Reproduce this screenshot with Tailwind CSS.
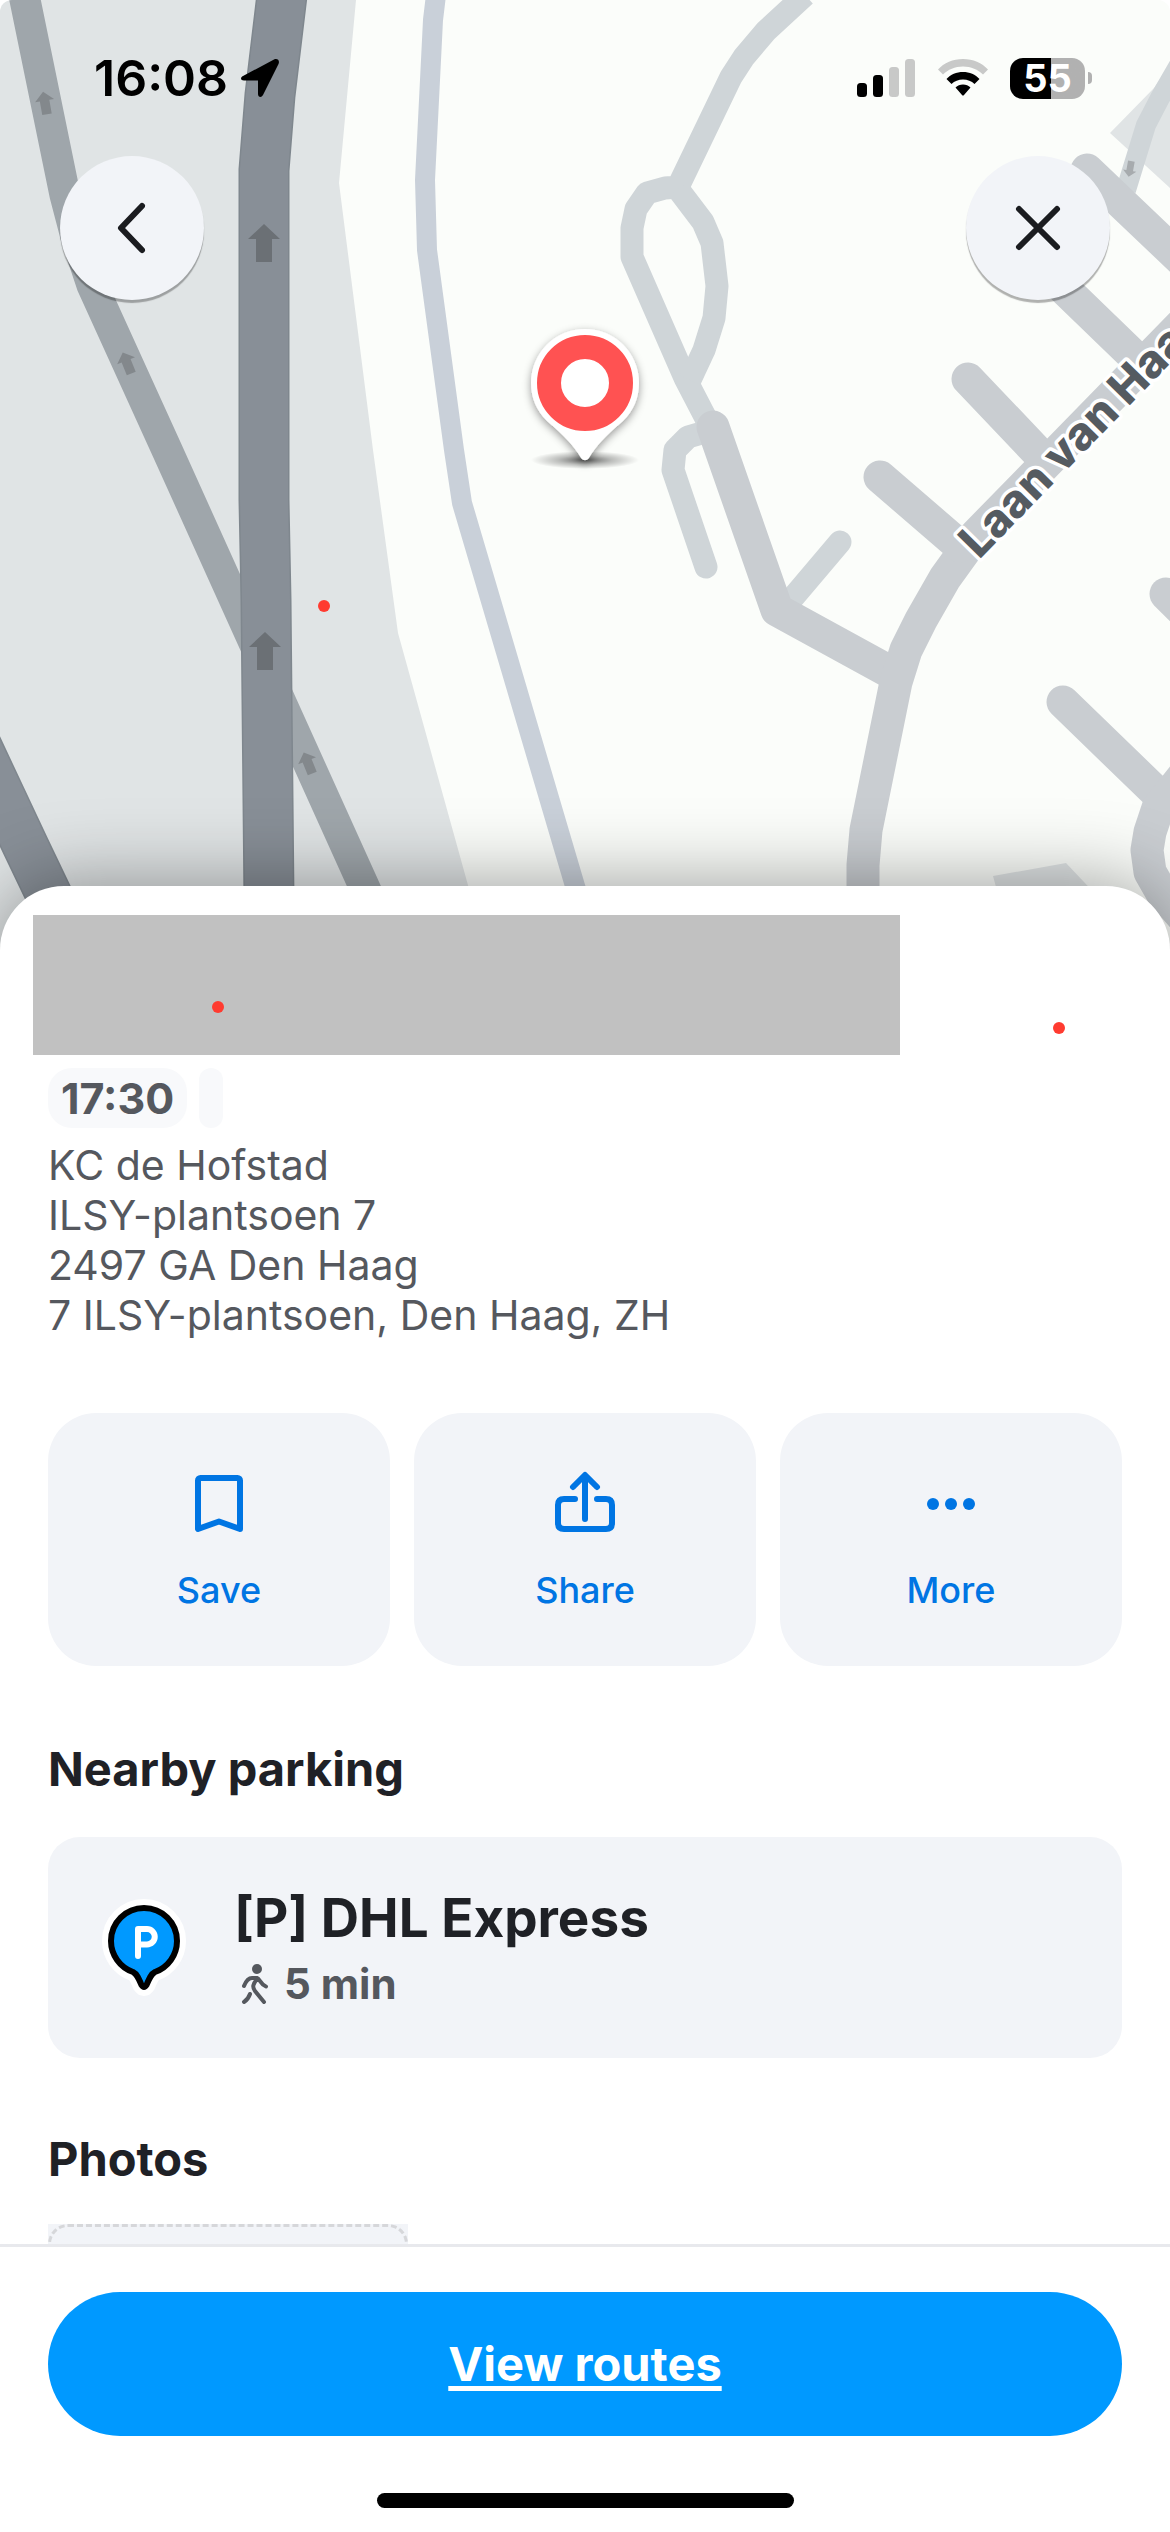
<!DOCTYPE html>
<html lang="en">
<head>
  <meta charset="UTF-8" />
  <meta name="viewport" content="width=device-width, initial-scale=1.0" />
  <title>KC de Hofstad</title>
  <script src="https://cdn.jsdelivr.net/npm/@tailwindcss/browser@4"></script>
</head>
<body class="bg-white font-['Inter','Liberation_Sans',sans-serif] text-[#1f2126]">
  <div class="flex h-screen flex-col overflow-hidden">

    <!-- Map -->
    <header class="relative h-[950px] shrink-0 overflow-hidden rounded-t-xl bg-[#fbfdfa]">
      <svg class="absolute inset-0 h-full w-full" viewBox="0 0 1170 950" preserveAspectRatio="xMidYMin slice" fill="none" aria-hidden="true">
        <defs>
          <radialGradient id="pinShadow">
            <stop offset="0" stop-color="#000" stop-opacity=".6" />
            <stop offset=".5" stop-color="#000" stop-opacity=".25" />
            <stop offset="1" stop-color="#000" stop-opacity="0" />
          </radialGradient>
          <filter id="soft" x="-30%" y="-30%" width="160%" height="160%">
            <feDropShadow dx="0" dy="3" stdDeviation="4" flood-color="#000" flood-opacity=".4" />
          </filter>
          <path id="arrow" d="M0 -19 16 -4H8V19H-8V-4H-16Z" />
          <path id="laan" d="M979 560 1246 286" />
        </defs>

        <!-- land -->
        <path fill="#e0e4e5" d="M0 0H356L339 183 373 450 398 633 486 950H0Z" />
        <path fill="#e0e4e5" d="M1110 133 1154 88 1170 65V188Z" />
        <path fill="#e0e4e5" d="M993 876 1066 863 1120 920H1005Z" />

        <!-- motorways -->
        <path stroke="#9fa6ab" stroke-width="31" d="M24 -5 65 195 76 237 92 285 167 450 395 955" />
        <path stroke="#7f878e" stroke-width="51" d="M282 -5 270 95 264 170V500L266 600 269 900V950" />
        <path stroke="#888f97" stroke-width="48" d="M282 -5 270 95 264 170V500L266 600 269 900V950" />
        <path stroke="#7f878e" stroke-width="47" d="M-36 715 26 847 80 960" />
        <path stroke="#888f97" stroke-width="44" d="M-36 715 26 847 80 960" />
        <g fill="#6b7075">
          <use href="#arrow" transform="translate(264 243)" />
          <use href="#arrow" transform="translate(265 651)" />
        </g>
        <g fill="#83888c">
          <use href="#arrow" transform="translate(45 103) rotate(-10) scale(.6)" />
          <use href="#arrow" transform="translate(127 363) rotate(-22) scale(.6)" />
          <use href="#arrow" transform="translate(308 763) rotate(-22) scale(.6)" />
        </g>

        <!-- water side path -->
        <path stroke="#c9d0d9" stroke-width="20" stroke-linejoin="round" d="M436 -5 433 20 425 180 427 250 454 450 462 503 575 886 595 950" />

        <!-- local roads -->
        <g stroke="#cfd5d8" stroke-width="23" stroke-linejoin="round">
          <path d="M805 -5 766 31 744 57 731 77 678 187 665 188 647 193 636 209 632 228V257L685 378 712 430" />
          <path d="M678 189 703 222 712 243 717 286 714 318 704 350 690 380" />
          <path stroke-linecap="round" d="M712 430 688 437 675 450 673 470 706 567" />
          <path stroke-linecap="round" d="M840 542 785 607" />
          <path stroke-width="20" d="M1182 60 1160 98 1146 125 1126 190" />
        </g>
        <use href="#arrow" fill="#a7abae" transform="translate(1130 169) rotate(190) scale(.42)" />
        <g stroke="#c9cdd1" stroke-width="33" stroke-linejoin="round" stroke-linecap="round">
          <path d="M713 427 777 610 892 673" />
          <path d="M863 950V865L866 830 896 682 906 650 921 620 945 578 976 535 1190 316" />
          <path d="M880 477 960 546" />
          <path d="M968 379 1045 460" />
          <path d="M1087 170 1190 268" />
          <path d="M1050 275 1140 362" />
          <path d="M1166 594 1200 628" />
          <path d="M1063 702 1160 796" />
          <path d="M1190 768 1158 808 1150 832 1147 850 1150 872 1162 893 1190 925" />
        </g>

        <text class="text-[46px] font-extrabold" fill="#555b61" stroke="#fff" stroke-width="7" stroke-linejoin="round" paint-order="stroke">
          <textPath href="#laan">Laan van Haag</textPath>
        </text>

        <!-- destination pin -->
        <ellipse cx="585" cy="460" rx="54" ry="9" fill="url(#pinShadow)" />
        <path filter="url(#soft)" fill="#fff" d="M585 329A54 54 0 0 1 639 383 54 54 0 0 1 623 421C605 436 596 446 589 458 587 461 583 461 581 458 574 446 565 436 547 421A54 54 0 0 1 531 383 54 54 0 0 1 585 329Z" />
        <circle cx="585" cy="383" r="36" stroke="#ff5252" stroke-width="24" />

        <circle cx="324" cy="606" r="6" fill="#ff3b30" />
      </svg>

      <!-- Status bar -->
      <div class="relative flex h-[156px] items-center justify-between pr-[78px] pl-[94px]">
        <div class="flex items-center gap-3">
          <span class="text-[50px] leading-none font-semibold text-black">16:08</span>
          <svg class="h-10 w-10" viewBox="0 0 40 40" aria-hidden="true">
            <path fill="#000" d="M3 18 34 1.500C37.500 0 40 2.500 38.500 6L23 37C21.500 40 18 39.500 18 36V22.500H4C.5 22.500 0 19.500 3 18Z" />
          </svg>
        </div>
        <div class="flex items-center gap-[22px]">
          <svg class="h-[38px] w-[59px]" viewBox="0 0 59 38" aria-hidden="true">
            <rect x="0" y="24" width="10" height="14" rx="3.500" />
            <rect x="16" y="16" width="10" height="22" rx="3.500" />
            <rect x="32" y="8" width="10" height="30" rx="3.500" fill="#c8c9c8" />
            <rect x="48" y="0" width="10" height="38" rx="3.500" fill="#c8c9c8" />
          </svg>
          <svg class="h-[38px] w-[50px]" viewBox="0 0 50 38" aria-hidden="true">
            <path fill="#c8c9c8" d="M25 0C35 0 44 4 50 10.500L45 15.500C40 10.500 33 7.500 25 7.500S10 10.500 5 15.500L0 10.500C6 4 15 0 25 0Z" />
            <path d="M25 13C31.500 13 37.500 15.500 41.500 20L36.500 25C33.500 22 29.500 20.500 25 20.500S16.500 22 13.500 25L8.500 20C12.500 15.500 18.500 13 25 13Z" />
            <path d="M25 25.500C28 25.500 30.500 26.500 32.500 28.500L26 36C25.500 36.800 24.500 36.800 24 36L17.500 28.500C19.500 26.500 22 25.500 25 25.500Z" />
          </svg>
          <div class="flex items-center gap-[3px]">
            <span class="flex h-[41px] w-[75px] items-center justify-center rounded-[13px] bg-linear-to-r from-black from-55% to-[#b1b1b1] to-55% text-[38px] leading-none font-bold text-white">55</span>
            <span class="h-3 w-1 rounded-r-full bg-[#b1b1b1]"></span>
          </div>
        </div>
      </div>

      <nav class="relative flex justify-between px-[60px]">
        <button type="button" aria-label="Back" class="flex size-36 items-center justify-center rounded-full bg-[#f2f4f8] shadow-[0_3px_1px_rgba(0,0,0,0.3)]">
          <svg class="size-14" viewBox="0 0 56 56" fill="none" stroke="#1b1c20" stroke-width="6" stroke-linecap="round" stroke-linejoin="round"><path d="M38 6 17 28 38 50" /></svg>
        </button>
        <button type="button" aria-label="Close" class="flex size-36 items-center justify-center rounded-full bg-[#f2f4f8] shadow-[0_3px_1px_rgba(0,0,0,0.3)]">
          <svg class="size-14" viewBox="0 0 56 56" fill="none" stroke="#1b1c20" stroke-width="6" stroke-linecap="round"><path d="M9 9 47 47M47 9 9 47" /></svg>
        </button>
      </nav>
    </header>

    <!-- Place sheet -->
    <main class="relative -mt-16 min-h-0 flex-1 rounded-t-[64px] bg-white pt-[29px] shadow-[0_0_80px_rgba(0,0,0,0.4)]">
      <div class="relative ml-[33px] h-[140px] w-[867px] max-w-full bg-[#c1c1c1]">
        <span class="absolute top-[86px] left-[179px] size-3 rounded-full bg-[#ff3b30]"></span>
        <span class="absolute top-[107px] left-[1020px] size-3 rounded-full bg-[#ff3b30]"></span>
      </div>

      <div class="h-[1189px] overflow-hidden px-12">
        <div class="mt-[13px] flex gap-3">
          <span class="flex h-[60px] items-center rounded-3xl bg-[#f8f9fb] px-[13px] text-[43px] font-bold text-[#55585e]">17:30</span>
          <span class="h-[60px] w-6 rounded-xl bg-[#f8f9fb]"></span>
        </div>
        <address class="mt-3 text-[41px] leading-[50px] text-[#55585e] not-italic">
          KC de Hofstad<br />
          ILSY-plantsoen 7<br />
          2497 GA Den Haag<br />
          7 ILSY-plantsoen, Den Haag, ZH
        </address>

        <div class="mt-[73px] grid grid-cols-3 gap-6 text-[36px] leading-[44px] font-medium text-[#0075e3]">
          <button type="button" class="flex h-[253px] flex-col items-center justify-center gap-7 rounded-[48px] bg-[#f2f4f8]">
            <svg class="size-[72px]" viewBox="0 0 72 72" fill="none" stroke="currentColor" stroke-width="6" stroke-linejoin="round"><path d="M15 12.500A2.500 2.500 0 0 1 17.500 10H54.500A2.500 2.500 0 0 1 57 12.500V61L36 53.500 15 61Z" /></svg>
            Save
          </button>
          <button type="button" class="flex h-[253px] flex-col items-center justify-center gap-7 rounded-[48px] bg-[#f2f4f8]">
            <svg class="size-[72px]" viewBox="0 0 72 72" fill="none" stroke="currentColor" stroke-width="6" stroke-linecap="round" stroke-linejoin="round"><path d="M36 51V8M24 19 36 7 48 19M26 31H15Q9 31 9 37V55Q9 61 15 61H57Q63 61 63 55V37Q63 31 57 31H48" /></svg>
            Share
          </button>
          <button type="button" class="flex h-[253px] flex-col items-center justify-center gap-7 rounded-[48px] bg-[#f2f4f8]">
            <svg class="size-[72px]" viewBox="0 0 72 72" fill="currentColor"><circle cx="18" cy="36" r="6" /><circle cx="36" cy="36" r="6" /><circle cx="54" cy="36" r="6" /></svg>
            More
          </button>
        </div>

        <h2 class="mt-[75px] text-[47px] leading-[56px] font-bold">Nearby parking</h2>
        <a href="#parking" class="mt-10 flex h-[221px] items-center rounded-[32px] bg-[#f2f4f8] pl-[54px]">
          <svg class="h-[98px] w-[84px]" viewBox="0 0 84 98" fill="none" aria-hidden="true">
            <defs>
              <path id="parkingPin" d="M42 9A33 33 0 0 1 75 42 33 33 0 0 1 53 73C49 75 47 80 44.500 86Q42 90 39.500 86C37 80 35 75 31 73A33 33 0 0 1 9 42 33 33 0 0 1 42 9Z" />
            </defs>
            <use href="#parkingPin" stroke="#fff" stroke-width="18" stroke-linejoin="round" />
            <use href="#parkingPin" fill="#09f" stroke="#000" stroke-width="6" stroke-linejoin="round" />
            <path d="M36 57V30H45A7.500 7.500 0 0 1 45 45.500H36" stroke="#fff" stroke-width="6" stroke-linecap="round" stroke-linejoin="round" />
          </svg>
          <div class="ml-12 pt-1">
            <p class="text-[53px] leading-[64px] font-bold">[P] DHL Express</p>
            <p class="mt-1 flex items-center gap-[14px] pl-1.5 text-[42px] leading-[60px] font-bold text-[#55585e]">
              <svg class="h-[42px] w-[30px]" viewBox="0 0 30 42" fill="none" stroke="currentColor" stroke-width="4" stroke-linecap="round" stroke-linejoin="round" aria-hidden="true">
                <circle cx="17" cy="6" r="5" fill="currentColor" stroke="none" />
                <path d="M4 23C6 18 8 15 12 15H17C20 16 20 21 26 23.500M17 16C13 21 12 24 15 28L24 39M10 31C9 34 7 37 4 39" />
              </svg>
              5 min
            </p>
          </div>
        </a>

        <h2 class="mt-[73px] text-[47px] leading-[56px] font-bold">Photos</h2>
        <div class="mt-[37px] w-[360px] bg-[#f2f4f8]">
          <div class="h-60 rounded-[20px] border-3 border-dashed border-[#d6d7da]"></div>
        </div>
      </div>
    </main>

    <footer class="relative shrink-0 border-t-3 border-[#e8e9ed] bg-white px-12 pt-[45px] pb-6">
      <a href="#routes" class="flex h-36 items-center justify-center rounded-full bg-[#09f] text-[47px] font-bold text-white underline decoration-[5px] underline-offset-[5px]">View routes</a>
      <div class="mx-auto mt-[57px] h-[15px] w-[417px] rounded-full bg-black"></div>
    </footer>
  </div>
</body>
</html>
